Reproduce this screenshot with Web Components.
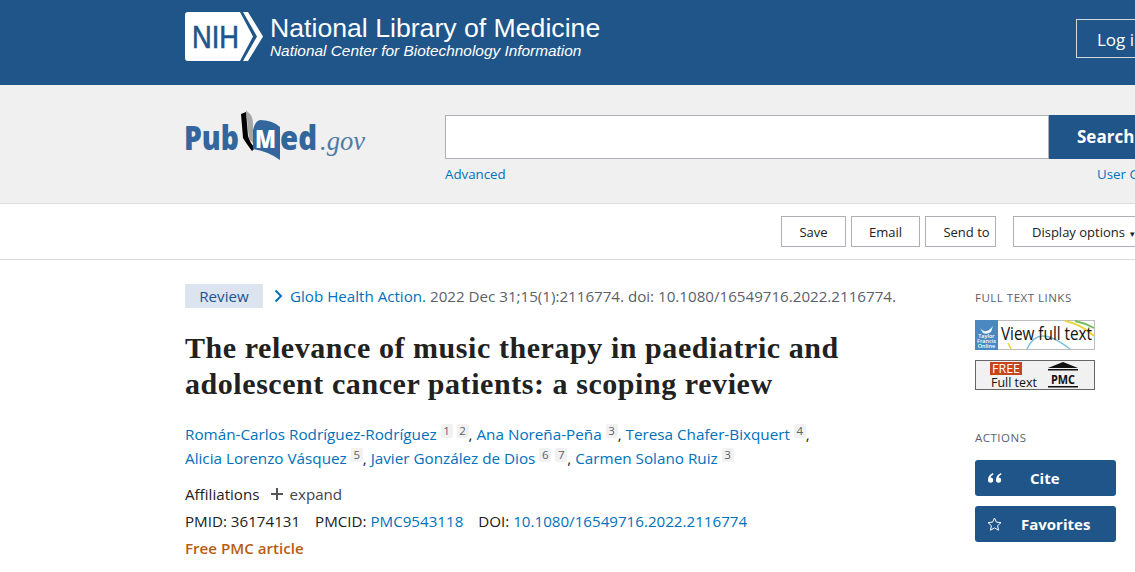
<!DOCTYPE html>
<html>
<head>
<meta charset="utf-8">
<style>
html, body { margin: 0; padding: 0; background: #fff; overflow: hidden; height: 572px; }
body { font-family: "Open Sans", "Noto Sans", sans-serif; }
</style>
</head>
<body>
<nih-header></nih-header>
<search-band></search-band>
<action-bar>
    <tool-button style="width:65px">Save</tool-button>
    <tool-button style="width:69px;margin-left:5px">Email</tool-button>
    <tool-button style="width:71px;margin-left:5px;padding-left:12px">Send to</tool-button>
    <tool-button style="width:150px;margin-left:17px;text-align:left;padding-left:18px">Display options <span style="font-size:9px;margin-left:2px">&#9662;</span></tool-button>
</action-bar>
<article-page>
    <article-head></article-head>
    <side-panel slot="side"></side-panel>
</article-page>

<script>
"use strict";
class NihHeader extends HTMLElement {
    constructor() {
        super();
        this.attachShadow({ mode: 'open' }).innerHTML = `
            <style>
                :host { display: flex; height: 85px; background: #20558a; color: #fff; padding-left: 185px; width: 1300px; box-sizing: border-box; font-family: "Liberation Sans", Arial, sans-serif; }
                .logo { margin-top: 12px; flex: none; }
                .names { margin: 13px 0 0 7px; width: 806px; flex: none; }
                .lib { font-size: 26.65px; line-height: 30px; white-space: nowrap; }
                .center { font-size: 15.4px; font-style: italic; line-height: 17px; margin-top: -1px; white-space: nowrap; }
                .login { margin-top: 19px; width: 120px; height: 39px; box-sizing: border-box; border: 1px solid #d6d7d9; font: 17px "Open Sans", sans-serif; padding: 8px 0 0 20px; }
            </style>
            <svg class="logo" width="78" height="49" viewBox="0 0 78 49">
                <path d="M3 0H55L68 24.5L55 49H3Q0 49 0 46V3Q0 0 3 0Z" fill="#fff"/>
                <path d="M58 0H63L78 24.5L63 49H58L72 24.5Z" fill="#fff"/>
                <text x="7" y="36" font-family="Liberation Sans, Arial, sans-serif" font-size="32" stroke="#20558a" stroke-width=".6" fill="#20558a" textLength="47" lengthAdjust="spacingAndGlyphs">NIH</text>
            </svg>
            <div class="names">
                <div class="lib">National Library of Medicine</div>
                <div class="center">National Center for Biotechnology Information</div>
            </div>
            <div class="login">Log in</div>
        `;
    }
}
customElements.define('nih-header', NihHeader);

class SearchBand extends HTMLElement {
    constructor() {
        super();
        this.attachShadow({ mode: 'open' }).innerHTML = `
            <style>
                :host { display: flex; box-sizing: border-box; height: 119px; width: 1300px; background: #f0f0f0; border-bottom: 1px solid #dcdcdc; padding-left: 185px; }
                .logo { margin: 20px 75px 0 -5px; flex: none; }
                .form { margin-top: 30px; width: 800px; }
                .row { display: flex; height: 44px; }
                .box { width: 604px; box-sizing: border-box; background: #fff; border: 1px solid #aeb0b5; }
                .go { width: 120px; background: #20558a; color: #fff; font-weight: 700; font-size: 17px; line-height: 44px; padding-left: 28px; box-sizing: border-box; }
                .links { display: flex; width: 730px; justify-content: space-between; font-size: 13.3px; color: #0071bc; margin-top: 7px; line-height: 16px; }
                .links span:last-child { width: 78px; white-space: nowrap; }
            </style>
            <svg class="logo" width="190" height="60" viewBox="0 0 190 60">
                <path d="M66 5L70 9Q73 12 73 20L73 38L69 34Z" fill="#a6a6a6"/>
                <path d="M61 9L66 7L68 31Q70 38 75 43L72 46Q66 38 63 33Z" fill="#000"/>
                <path d="M73 25Q75 16 80 15Q92 15 100 22L100 55Q88 46 73 44Z" fill="#33669c"/>
                <text x="4" y="45" font-family="Open Sans, sans-serif" font-weight="800" font-size="33" fill="#33669c" textLength="55" lengthAdjust="spacingAndGlyphs">Pub</text>
                <text x="75" y="43" font-family="Open Sans, sans-serif" font-weight="800" font-size="24" fill="#fff" textLength="21" lengthAdjust="spacingAndGlyphs">M</text>
                <text x="100" y="45" font-family="Open Sans, sans-serif" font-weight="800" font-size="33" fill="#33669c" textLength="37" lengthAdjust="spacingAndGlyphs">ed</text>
                <text x="140" y="45" font-family="Liberation Serif, serif" font-style="italic" font-size="27" fill="#4f7aa6" textLength="45" lengthAdjust="spacingAndGlyphs">.gov</text>
            </svg>
            <div class="form">
                <div class="row"><div class="box"></div><div class="go">Search</div></div>
                <div class="links"><span>Advanced</span><span>User Guide</span></div>
            </div>
        `;
    }
}
customElements.define('search-band', SearchBand);

class ActionBar extends HTMLElement {
    constructor() {
        super();
        this.attachShadow({ mode: 'open' }).innerHTML = `
            <style>
                :host { display: flex; box-sizing: border-box; height: 56px; width: 1300px; border-bottom: 1px solid #dcdcdc; padding: 12px 0 0 781px; }
            </style>
            <slot></slot>
        `;
    }
}
customElements.define('action-bar', ActionBar);

class ToolButton extends HTMLElement {
    constructor() {
        super();
        this.attachShadow({ mode: 'open' }).innerHTML = `
            <style>
                :host { display: block; box-sizing: border-box; height: 31px; border: 1px solid #aeb0b5; color: #212121; font-size: 13px; line-height: 30px; text-align: center; white-space: nowrap; flex: none; }
            </style>
            <slot></slot>
        `;
    }
}
customElements.define('tool-button', ToolButton);

class ArticlePage extends HTMLElement {
    constructor() {
        super();
        this.attachShadow({ mode: 'open' }).innerHTML = `
            <style>
                :host { display: grid; grid-template-columns: 790px 141px; width: 1300px; box-sizing: border-box; padding: 24px 0 0 185px; }
            </style>
            <slot></slot>
            <slot name="side"></slot>
        `;
    }
}
customElements.define('article-page', ArticlePage);

class ArticleHead extends HTMLElement {
    constructor() {
        super();
        this.attachShadow({ mode: 'open' }).innerHTML = `
            <style>
                :host { display: block; color: #212121; font-size: 15.15px; }
                a { color: #0071bc; }
                .cite { display: flex; align-items: center; height: 24px; white-space: nowrap; color: #5b616b; }
                .tag { width: 78px; height: 24px; line-height: 24px; text-align: center; background: #dce4ef; color: #205493; margin-right: 11px; }
                .cite svg { margin-right: 7px; }
                h1 { font: 700 30px/36px "Liberation Serif", serif; color: #212121; margin: 22px 0 0; letter-spacing: .56px; }
                .authors { margin-top: 20px; line-height: 24px; white-space: nowrap; font-size: 15.25px; }
                sup { display: inline-block; background: #f1f1f1; color: #5b616b; font-size: 11.5px; line-height: 14px; width: 12px; text-align: center; border-radius: 2px; vertical-align: 5px; }
                .aff { margin-top: 12px; line-height: 24px; display: flex; align-items: center; }
                .aff svg { margin: 0 6px 0 12px; }
                .aff .x { color: #444; }
                .ids { line-height: 24px; margin-top: 3px; white-space: nowrap; }
                .ids b { font-weight: 400; margin-left: 11px; }
                .free { line-height: 24px; margin-top: 3px; font-weight: 600; color: #b85c12; }
            </style>
            <div class="cite">
                <span class="tag">Review</span>
                <svg width="9" height="14" viewBox="0 0 9 14"><path d="M1.5 1.5L7 7L1.5 12.5" fill="none" stroke="#0071bc" stroke-width="2"/></svg>
                <a>Glob Health Action.</a>&nbsp;2022 Dec 31;15(1):2116774. doi: 10.1080/16549716.2022.2116774.
            </div>
            <h1>The relevance of music therapy in paediatric and<br>adolescent cancer patients: a scoping review</h1>
            <div class="authors">
                <a>Román-Carlos Rodríguez-Rodríguez</a> <sup>1</sup> <sup>2</sup>, <a>Ana Noreña-Peña</a> <sup>3</sup>, <a>Teresa Chafer-Bixquert</a> <sup>4</sup>,<br>
                <a>Alicia Lorenzo Vásquez</a> <sup>5</sup>, <a>Javier González de Dios</a> <sup>6</sup> <sup>7</sup>, <a>Carmen Solano Ruiz</a> <sup>3</sup>
            </div>
            <div class="aff">Affiliations
                <svg width="12" height="12" viewBox="0 0 12 12"><path d="M6 0V12M0 6H12" stroke="#555" stroke-width="2"/></svg>
                <span class="x">expand</span>
            </div>
            <div class="ids">PMID: 36174131 <b>PMCID:</b> <a>PMC9543118</a> <b>DOI:</b> <a>10.1080/16549716.2022.2116774</a></div>
            <div class="free">Free PMC article</div>
        `;
    }
}
customElements.define('article-head', ArticleHead);

class SidePanel extends HTMLElement {
    constructor() {
        super();
        this.attachShadow({ mode: 'open' }).innerHTML = `
            <style>
                :host { display: block; }
                h3 { margin: 0; font-size: 11.5px; font-weight: 400; line-height: 14px; letter-spacing: .5px; color: #5b616b; text-transform: uppercase; }
                .first { margin-top: 7px; }
                svg { display: block; }
                .tf { margin-top: 15px; }
                .pmc { margin-top: 10px; }
                .actions { margin-top: 41px; }
                .btn { display: flex; align-items: center; height: 36px; border-radius: 3px; background: #20558a; color: #fff; font-weight: 700; font-size: 15px; margin-top: 10px; }
                .btn.cite { margin-top: 15px; }
                .btn .ic { width: 46px; padding-left: 12px; flex: none; box-sizing: border-box; display: flex; }
                .btn.cite .ic { width: 55px; }
            </style>
            <h3 class="first">Full text links</h3>
            <svg class="tf" width="120" height="30" viewBox="0 0 120 30">
                <rect x=".5" y=".5" width="119" height="29" fill="#fff" stroke="#bdbdbd"/>
                <path d="M90 1Q106 4 119 16" fill="none" stroke="#ecd53f" stroke-width="2"/>
                <path d="M100 1Q110 3 119 8" fill="none" stroke="#74bd5c" stroke-width="2"/>
                <path d="M52 29Q58 16 68 16T95 29" fill="none" stroke="#7fc0d8" stroke-width="1.5"/>
                <path d="M33 23L36 29" fill="none" stroke="#ecd53f" stroke-width="1.5"/>
                <rect x="0" y="0" width="23" height="30" fill="#4b87c0"/>
                <path d="M5 8Q8 12 11 11Q14 11 18 6L16 12Q12 15 8 13Z" fill="#eef3f8"/>
                <text x="11.5" y="18" font-size="5.5" font-weight="600" text-anchor="middle" font-family="Open Sans, sans-serif" fill="#fff">Taylor</text>
                <text x="11.5" y="23" font-size="5.5" font-weight="600" text-anchor="middle" font-family="Open Sans, sans-serif" fill="#fff">Francis</text>
                <text x="11.5" y="28" font-size="5.5" font-weight="600" text-anchor="middle" font-family="Open Sans, sans-serif" fill="#fff">Online</text>
                <text transform="translate(26 20) scale(.85 1)" font-size="18" font-family="Open Sans, sans-serif" fill="#111">View full text</text>
            </svg>
            <svg class="pmc" width="120" height="30" viewBox="0 0 120 30">
                <rect x=".5" y=".5" width="119" height="29" fill="#f1f1f1" stroke="#666"/>
                <rect x="15" y="2" width="32" height="13" fill="#c6451c"/>
                <text x="17" y="13" font-size="12.5" font-family="Open Sans, sans-serif" fill="#fff" textLength="28" lengthAdjust="spacingAndGlyphs">FREE</text>
                <text x="16" y="27" font-size="13" font-family="Open Sans, sans-serif" fill="#111" textLength="46" lengthAdjust="spacingAndGlyphs">Full text</text>
                <path d="M73 8L88 2L103 8Z" fill="#111"/>
                <rect x="73" y="9" width="30" height="1.5" fill="#111"/>
                <text x="76" y="24" font-size="13" font-weight="700" font-family="Open Sans, sans-serif" fill="#111" textLength="24" lengthAdjust="spacingAndGlyphs">PMC</text>
                <rect x="73" y="26" width="30" height="1.5" fill="#111"/>
            </svg>
            <h3 class="actions">Actions</h3>
            <div class="btn cite">
                <span class="ic"><svg width="15" height="12" viewBox="0 0 15 12"><path d="M6 1Q1 3 1 8A2.6 2.6 0 1 0 3.5 5.5Q4 3.5 6.4 2.4ZM14 1Q9 3 9 8A2.6 2.6 0 1 0 11.5 5.5Q12 3.5 14.4 2.4Z" fill="#fff"/></svg></span>
                <span>Cite</span>
            </div>
            <div class="btn">
                <span class="ic"><svg width="15" height="14" viewBox="0 0 15 14"><path d="M7.5 1L9.4 5.1L14 5.6L10.6 8.7L11.5 13.2L7.5 10.9L3.5 13.2L4.4 8.7L1 5.6L5.6 5.1Z" fill="none" stroke="#fff"/></svg></span>
                <span>Favorites</span>
            </div>
        `;
    }
}
customElements.define('side-panel', SidePanel);
</script>
</body>
</html>
